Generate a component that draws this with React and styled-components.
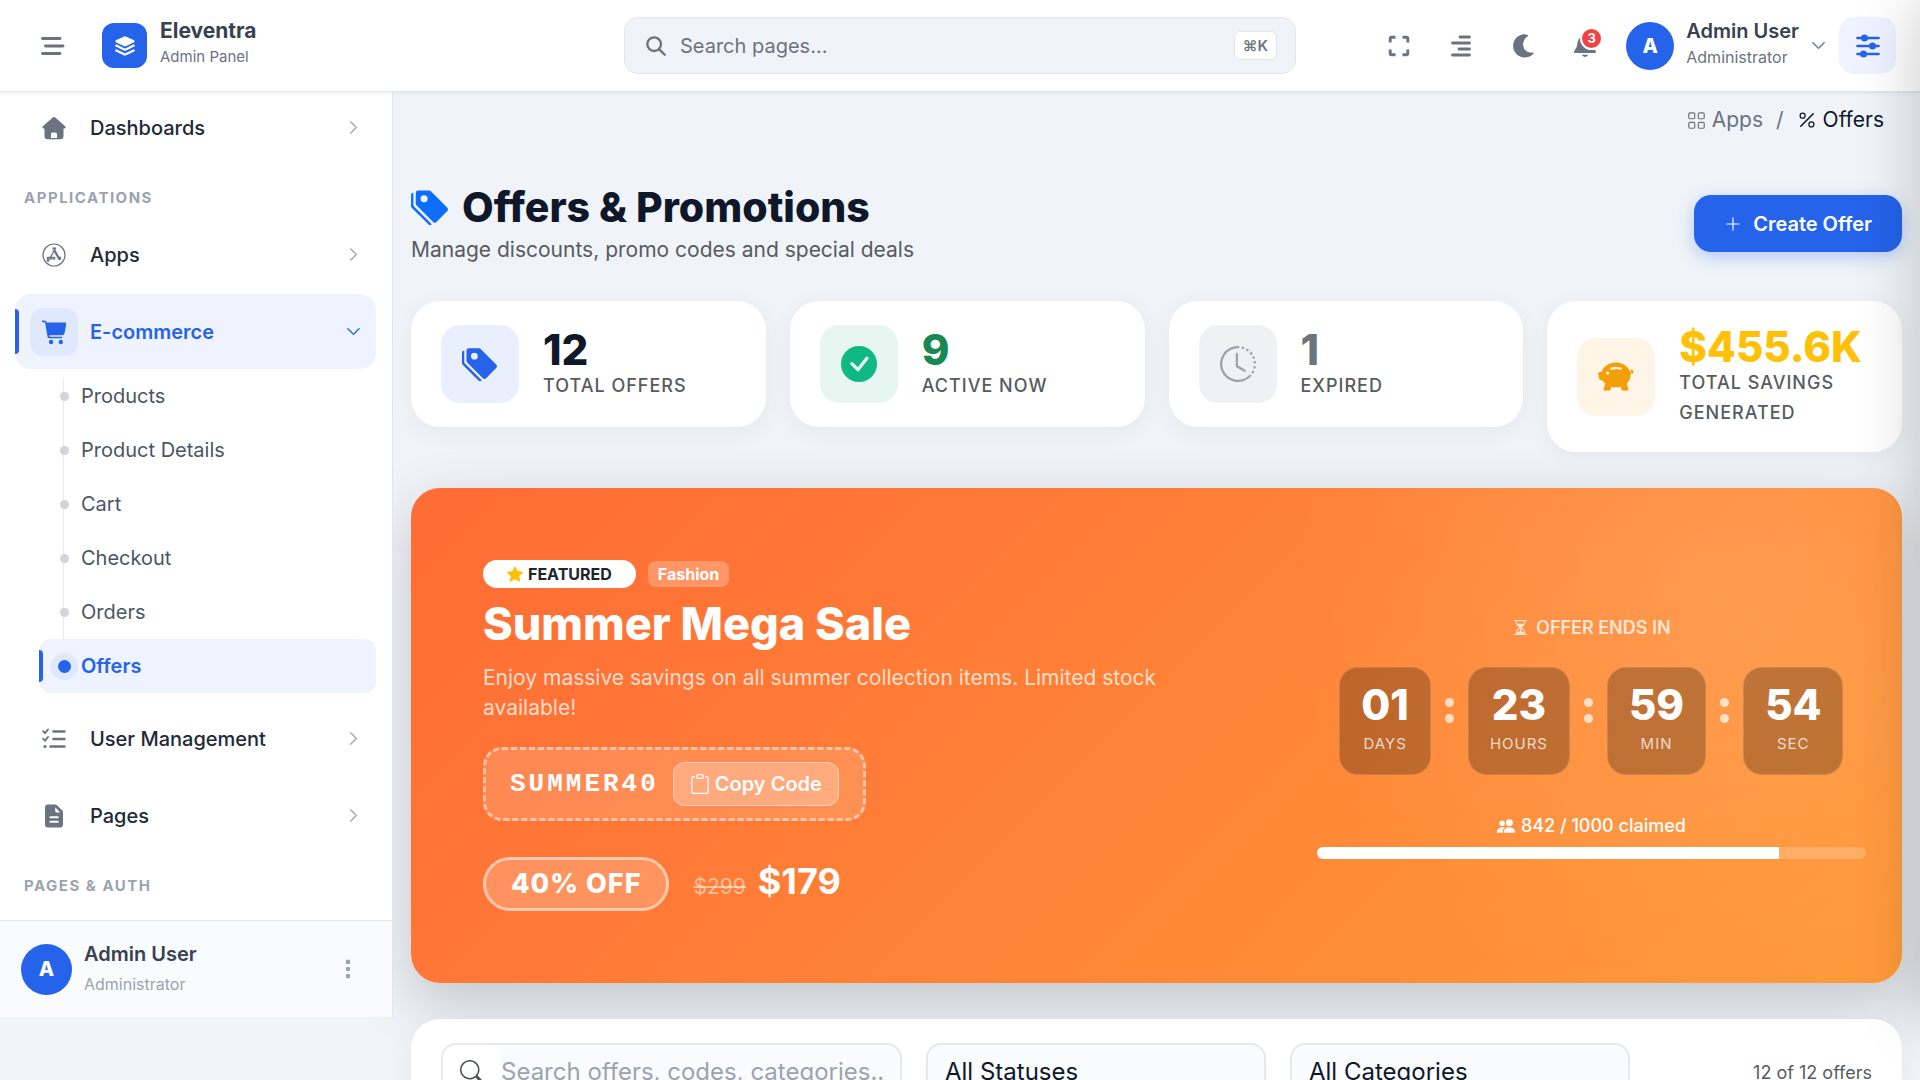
import React from "react";
import styled, { createGlobalStyle, css } from "styled-components";
import {
  BsTagsFill, BsCheckCircleFill, BsClockHistory, BsPiggyBankFill, BsStarFill, BsClipboard,
  BsHourglassSplit, BsPeopleFill, BsSearch, BsGrid, BsPercent, BsPlusLg, BsChevronRight, BsChevronDown,
} from "react-icons/bs";

const Global = createGlobalStyle`
  *, *::before, *::after { box-sizing: border-box; }
  html { scrollbar-width: none; }
  body {
    margin: 0;
    background: #f0f4f8;
    color: #1f2937;
    font-family: Inter, "Liberation Sans", sans-serif;
    font-size: 20px;
    line-height: 1.5;
  }
  button, input, select { font: inherit; color: inherit; }
  button { border: 0; background: none; padding: 0; cursor: pointer; }
  a { color: inherit; text-decoration: none; }
  ul { list-style: none; margin: 0; padding: 0; }
  h1, h2, p { margin: 0; }
  svg { display: block; flex: none; }
`;

/* ---------- icons ---------- */
const Svg = ({ size = 24, children, ...rest }) => (
  <svg width={size} height={size} viewBox="0 0 24 24" fill="none" stroke="currentColor"
    strokeLinecap="round" strokeLinejoin="round" aria-hidden="true" {...rest}>{children}</svg>
);
const MenuIcon = () => <Svg size={24} strokeWidth="2.9"><path d="M1.500 4.500h17.500M4.500 12h17.500M1.500 19.500h17.500" /></Svg>;
const LayersIcon = () => (
  <Svg size={20} fill="currentColor" stroke="none">
    <path d="M11.100 .5a2 2 0 0 1 1.800 0l10 4.700a1.300 1.300 0 0 1 0 2.300l-10 4.700a2 2 0 0 1-1.800 0l-10-4.700a1.300 1.300 0 0 1 0-2.300z" />
    <path d="M1.500 11.500l9.600 4.600a2 2 0 0 0 1.800 0l9.600-4.600M1.500 17.300l9.600 4.600a2 2 0 0 0 1.800 0l9.600-4.600" fill="none" stroke="currentColor" strokeWidth="2.600" />
  </Svg>
);
const HomeIcon = () => (
  <Svg size={24} fill="currentColor" stroke="none">
    <path d="M10.700 1.500a2 2 0 0 1 2.600 0l9.800 8.700c1 1 .4 2.300-.9 2.300H21.500V20a3.300 3.300 0 0 1-3.300 3.300H15V18a1.600 1.600 0 0 0-1.600-1.600h-2.800A1.600 1.600 0 0 0 9 18v5.300H5.800A3.300 3.300 0 0 1 2.500 20v-7.500h-.7c-1.300 0-1.900-1.300-.9-2.300z" />
    <path d="M9 22h6v1.300H9z" />
  </Svg>
);
const AppStoreIcon = () => (
  <Svg size={24} strokeWidth="1.200">
    <circle cx="12" cy="12" r="11" />
    <path d="M10.700 5.200l.7-.3.700 1.300.7-1.300.8.400-.8 1.800 5.300 9.200-.9.500-5.100-8.800-4 6.900M11 7.600l.6 1.200-3.300 5.600M5.500 14.300h6.700l.8 1.500H5.300zM15.600 14.300h3l.1 1.500h-2.200M7 17l-.9 1.300-.9-.4.500-.9" />
  </Svg>
);
const CartIcon = () => (
  <Svg size={26} fill="currentColor" stroke="none">
    <path d="M1 1.300h1.800a2.600 2.600 0 0 1 2.500 1.900H22a1.300 1.300 0 0 1 1.300 1.500l-1.500 8.200a2.600 2.600 0 0 1-2.600 2.100H7.700l.2 1.300h11.600v1.500H7.600a1.600 1.600 0 0 1-1.500-1.300L3.900 4a1.200 1.200 0 0 0-1.100-1H1z" />
    <circle cx="9.300" cy="21.200" r="2" /><circle cx="18.300" cy="21.200" r="2" />
  </Svg>
);
const ListCheckIcon = () => (
  <Svg size={24} strokeWidth="2.500">
    <path d="M11.500 4.500H22.500M11.500 12H22.500M8.500 19.500H22.500" />
    <path d="M1.200 4.300l1.800 1.900L6 2.500M1.200 11.800l1.800 1.900L6 10" strokeWidth="1.900" />
    <circle cx="3" cy="19.500" r="1.600" fill="currentColor" stroke="none" />
  </Svg>
);
const FileIcon = () => (
  <Svg size={24} fill="currentColor" stroke="none">
    <path fillRule="evenodd" d="M6.300 .5H13c.9 0 1.700.3 2.300.9l4.800 4.800c.6.600.9 1.400.9 2.300V20.500a3 3 0 0 1-3 3H6a3 3 0 0 1-3-3V3.800A3.300 3.300 0 0 1 6.300.5zM13.200 3.200v3.600c0 .9.700 1.600 1.600 1.600h3.400zM8.400 12.300a1 1 0 0 0 0 2h7.400a1 1 0 0 0 0-2zM8.400 16.800a1 1 0 0 0 0 2h7.400a1 1 0 0 0 0-2z" />
  </Svg>
);
const ExpandIcon = () => <Svg size={24} strokeWidth="2.900" strokeLinecap="butt"><path d="M3.200 8.500V4.200a1 1 0 0 1 1-1h4.300M15.500 3.200h4.300a1 1 0 0 1 1 1v4.300M20.800 15.500v4.300a1 1 0 0 1-1 1h-4.300M8.500 20.800H4.200a1 1 0 0 1-1-1v-4.300" /></Svg>;
const AlignIcon = () => <Svg size={24} strokeWidth="2.800"><path d="M11 3h9.500M3.500 9h17M10 15h10.500M3.500 21h17" /></Svg>;
const MoonIcon = () => <Svg size={24} fill="currentColor" stroke="none"><path d="M12.300 .3c1.600 0 3.100.4 4.400 1 .6.300.5 1.100-.1 1.300a8.600 8.600 0 0 0 2.300 16c1 .2 2 .2 3 0 .6-.1 1 .6.600 1.100A11.700 11.700 0 1 1 12.300.3z" /></Svg>;
const BellIcon = () => (
  <Svg size={24} fill="currentColor" stroke="none">
    <path d="M12 2a7.500 7.500 0 0 0-7.300 5.800L3.500 13.500l-2.200 3.400c-.6 1 .1 2.100 1.200 2.100h19c1.100 0 1.800-1.100 1.200-2.100l-2.200-3.400-1.200-5.700A7.500 7.500 0 0 0 12 2zM8.700 20.800a3.600 3.600 0 0 0 6.600 0z" />
  </Svg>
);
const SlidersIcon = () => (
  <Svg size={24} strokeWidth="2.700">
    <path d="M1.500 4h21M1.500 12h21M1.500 20h21" />
    <g fill="currentColor" stroke="none"><circle cx="8.500" cy="4" r="3.500" /><circle cx="16.500" cy="12" r="3.500" /><circle cx="7.500" cy="20" r="3.500" /></g>
  </Svg>
);
const DotsIcon = () => <Svg size={20} fill="currentColor" stroke="none"><circle cx="12" cy="3.500" r="2.800" /><circle cx="12" cy="12" r="2.800" /><circle cx="12" cy="20.500" r="2.800" /></Svg>;
const SearchIcon = () => <Svg size={20} strokeWidth="2.800"><circle cx="9.800" cy="9.800" r="8.200" /><path d="M16 16l6.500 6.500" /></Svg>;

/* ---------- header ---------- */
const Header = styled.header`
  position: sticky;
  top: 0;
  z-index: 10;
  display: grid;
  grid-template-columns: 1fr minmax(0, 672px) 1fr;
  align-items: center;
  height: 92px;
  padding: 0 24px;
  background: #fff;
  border-bottom: 1px solid #e2e5ea;
  box-shadow: 0 1px 4px rgba(0, 0, 0, 0.08);
`;
const Brand = styled.div`
  display: flex;
  align-items: center;
`;
const IconButton = styled.button`
  position: relative;
  display: grid;
  place-items: center;
  width: 57px;
  height: 57px;
  border-radius: 15px;
  color: ${(p) => (p.$active ? "#2563eb" : "#6b7280")};
  background: ${(p) => (p.$active ? "#eef3ff" : "transparent")};
`;
const Logo = styled.a`
  display: grid;
  place-items: center;
  width: 45px;
  height: 45px;
  margin-left: 21px;
  margin-right: 13px;
  border-radius: 12px;
  color: #fff;
  background: #2563eb;
`;
const Stack = styled.span`
  display: flex;
  flex-direction: column;
  text-align: left;
`;
const HeaderStack = styled(Stack)`
  padding-bottom: 4px;
`;
const BrandName = styled.strong`
  font-size: 21px;
  line-height: 26px;
  font-weight: 700;
  color: #374151;
`;
const Muted = styled.span`
  font-size: ${(p) => (p.$small ? 15 : 16)}px;
  line-height: 26px;
  color: ${(p) => (p.$light ? "#9ca3af" : "#6b7280")};
`;
const UserName = styled.strong`
  font-size: 20px;
  line-height: 26px;
  font-weight: 600;
  color: #374151;
`;
const SearchBox = styled.label`
  display: flex;
  align-items: center;
  gap: 14px;
  height: 57px;
  padding: 0 18px 0 21px;
  border: 1px solid #e2e5ea;
  border-radius: 14px;
  background: #f0f4f8;
  color: #6b7280;
`;
const SearchInput = styled.input`
  flex: 1;
  min-width: 0;
  border: 0;
  outline: 0;
  padding: 0;
  background: transparent;
  &::placeholder { color: #6b7280; opacity: 1; }
`;
const Kbd = styled.kbd`
  padding: 0 8px;
  border: 1px solid #e2e5ea;
  border-radius: 6px;
  background: #fff;
  font-family: inherit;
  font-size: 15px;
  line-height: 27px;
  font-weight: 600;
`;
const Actions = styled.div`
  display: flex;
  align-items: center;
  justify-content: flex-end;
  gap: 5px;
`;
const Badge = styled.span`
  position: absolute;
  top: 10px;
  right: 10px;
  width: 23px;
  height: 23px;
  border: 2px solid #fff;
  border-radius: 50%;
  background: #ef4444;
  color: #fff;
  font-size: 13px;
  line-height: 19px;
  font-weight: 700;
  text-align: center;
`;
const UserButton = styled.button`
  display: flex;
  align-items: center;
  gap: 12px;
  padding: 0 8px;
  color: #6b7280;
`;
const Avatar = styled.span`
  display: grid;
  place-items: center;
  width: ${(p) => p.$size}px;
  height: ${(p) => p.$size}px;
  border-radius: 50%;
  background: #2563eb;
  color: #fff;
  font-size: 20px;
  font-weight: 800;
`;

/* ---------- sidebar ---------- */
const Shell = styled.div`
  display: flex;
  align-items: flex-start;
`;
const Sidebar = styled.aside`
  position: relative;
  z-index: 1;
  flex: none;
  width: 393px;
  background: #fff;
  border-right: 1px solid #e2e5ea;
`;
const Nav = styled.nav`
  display: flex;
  flex-direction: column;
  gap: 2px;
  margin-top: -2px;
  padding: 0 16px 0 15px;
`;
const NavLabel = styled.span`
  padding: 19px 9px 5px;
  font-size: 15px;
  line-height: 24px;
  font-weight: 700;
  letter-spacing: 0.1em;
  color: #9ca3af;
`;
const bar = css`
  &::before {
    content: "";
    position: absolute;
    left: 0;
    top: 20%;
    bottom: 20%;
    width: 4px;
    border-radius: 0 4px 4px 0;
    background: #2563eb;
  }
`;
const NavItem = styled.button`
  position: relative;
  display: grid;
  grid-template-columns: 48px 1fr 20px;
  align-items: center;
  column-gap: 12px;
  width: 100%;
  height: 75px;
  padding: 0 13px 0 15px;
  border-radius: 16px;
  text-align: left;
  font-weight: ${(p) => (p.$active ? 600 : 500)};
  color: ${(p) => (p.$active ? "#2563eb" : "#1f2937")};
  background: ${(p) => (p.$active ? "#eef3ff" : "transparent")};
  ${(p) => p.$active && bar}
`;
const NavIcon = styled.span`
  display: grid;
  place-items: center;
  height: 48px;
  border-radius: 13px;
  color: ${(p) => (p.$active ? "#2563eb" : "#6b7280")};
  background: ${(p) => (p.$active ? "#e0e8fd" : "transparent")};
`;
const Chevron = styled.span`
  display: grid;
  place-items: center;
  color: ${(p) => (p.$active ? "#2563eb" : "#9ca3af")};
`;
const SubList = styled.ul`
  margin: -2px 0 6px 24px;
  background: linear-gradient(#e8eaee, #e8eaee) 24px 10px / 1px 260px no-repeat;
`;
const SubItem = styled.a`
  position: relative;
  display: grid;
  grid-template-columns: 27px 1fr;
  align-items: center;
  column-gap: 3px;
  height: 54px;
  padding-left: 12px;
  border-radius: 12px;
  font-weight: ${(p) => (p.$active ? 600 : 400)};
  color: ${(p) => (p.$active ? "#2563eb" : "#4b5563")};
  background: ${(p) => (p.$active ? "#eef3ff" : "transparent")};
  ${(p) => p.$active && bar}
`;
const Dot = styled.i`
  justify-self: center;
  width: ${(p) => (p.$active ? 13 : 9)}px;
  height: ${(p) => (p.$active ? 13 : 9)}px;
  border-radius: 50%;
  background: ${(p) => (p.$active ? "#2563eb" : "#d1d5db")};
  box-shadow: ${(p) => (p.$active ? "0 0 0 7px #dfe8fd" : "none")};
`;
const SideFooter = styled.div`
  display: flex;
  align-items: center;
  gap: 12px;
  height: 97px;
  margin-top: 17px;
  padding: 0 34px 0 21px;
  border-top: 1px solid #e2e5ea;
  background: #fafbfd;
  color: #9ca3af;
  ${Stack} { flex: 1; gap: 4px; }
`;

/* ---------- page ---------- */
const Main = styled.main`
  flex: 1;
  min-width: 0;
  padding: 10px 18px 36px;
`;
const Crumbs = styled.nav`
  display: flex;
  align-items: center;
  justify-content: flex-end;
  gap: 13px;
  padding-right: 18px;
  font-size: 21px;
  line-height: 36px;
  color: #6b7280;
`;
const Crumb = styled.a`
  display: flex;
  align-items: center;
  gap: 6px;
  color: ${(p) => (p.$current ? "#0f172a" : "inherit")};
`;
const PageHead = styled.div`
  display: flex;
  align-items: center;
  justify-content: space-between;
  margin: 43px 0 35px;
`;
const Title = styled.h1`
  display: flex;
  align-items: center;
  gap: 13px;
  font-size: 41px;
  line-height: 52px;
  font-weight: 800;
  color: #0f172a;
  svg { color: #0d6efd; }
`;
const Subtitle = styled.p`
  font-size: 21px;
  line-height: 33px;
  color: #565b60;
`;
const CreateButton = styled.button`
  display: flex;
  align-items: center;
  gap: 11px;
  height: 57px;
  padding: 0 30px;
  border-radius: 17px;
  background: #2563eb;
  box-shadow: 0 5px 17px rgba(37, 99, 235, 0.3);
  color: #fff;
  font-weight: 600;
`;
const Stats = styled.section`
  display: grid;
  grid-template-columns: repeat(4, minmax(0, 1fr));
  align-items: start;
  gap: 24px;
`;
const StatCard = styled.article`
  display: flex;
  align-items: center;
  gap: 24px;
  padding: 24px 30px;
  border-radius: 29px;
  background: #fff;
  box-shadow: 0 5px 24px rgba(0, 0, 0, 0.05);
`;
const StatIcon = styled.span`
  display: grid;
  place-items: center;
  flex: none;
  width: 78px;
  height: 78px;
  border-radius: 19px;
  color: ${(p) => p.$color};
  background: ${(p) => p.$bg};
`;
const StatValue = styled.strong`
  font-size: 42px;
  line-height: 43px;
  font-weight: 800;
  color: ${(p) => p.$color};
`;
const StatLabel = styled.span`
  font-size: 18px;
  line-height: 30px;
  font-weight: 500;
  letter-spacing: 1px;
  color: #565b60;
`;

/* ---------- featured offer ---------- */
const Banner = styled.section`
  display: grid;
  grid-template-columns: 7fr 5fr;
  align-items: center;
  margin: 36px 0;
  border-radius: 29px;
  color: #fff;
  background:
    radial-gradient(circle at 88% 22%, rgba(255, 255, 255, 0.12), transparent 32%),
    linear-gradient(135deg, #ff6b35, #ff9a38);
  box-shadow: 0 20px 60px rgba(0, 0, 0, 0.2);
`;
const Offer = styled.div`
  display: flex;
  flex-direction: column;
  align-items: flex-start;
  padding: 72px;
`;
const Tags = styled.div`
  display: flex;
  align-items: center;
  gap: 12px;
`;
const Tag = styled.span`
  display: flex;
  align-items: center;
  gap: 5px;
  padding: 0 ${(p) => (p.$solid ? 24 : 10)}px;
  border-radius: ${(p) => (p.$solid ? 14 : 8)}px;
  background: ${(p) => (p.$solid ? "#fff" : "rgba(255, 255, 255, 0.25)")};
  color: ${(p) => (p.$solid ? "#212529" : "#fff")};
  font-size: 16px;
  line-height: ${(p) => (p.$solid ? 28 : 26)}px;
  font-weight: 700;
  svg { color: #ffc107; }
`;
const OfferTitle = styled.h2`
  margin-top: 9px;
  font-size: 45px;
  line-height: 54px;
  font-weight: 800;
`;
const OfferText = styled.p`
  margin: 12px 0 24px;
  font-size: 21px;
  line-height: 30px;
  color: rgba(255, 255, 255, 0.75);
`;
const CodeBox = styled.div`
  display: flex;
  align-items: center;
  gap: 14px;
  height: 74px;
  padding: 0 24px;
  border: 3px dashed rgba(255, 255, 255, 0.5);
  border-radius: 19px;
  background: rgba(255, 255, 255, 0.15);
`;
const Code = styled.code`
  font-family: "Liberation Mono", "Courier New", monospace;
  font-size: 26px;
  font-weight: 700;
  letter-spacing: 3px;
`;
const CopyButton = styled.button`
  display: flex;
  align-items: center;
  gap: 5px;
  height: 44px;
  padding: 0 16px;
  border: 1px solid rgba(255, 255, 255, 0.4);
  border-radius: 12px;
  background: rgba(255, 255, 255, 0.25);
  font-weight: 600;
`;
const PriceRow = styled.div`
  display: flex;
  align-items: center;
  gap: 24px;
  margin-top: 36px;
`;
const Discount = styled.strong`
  padding: 0 25px;
  border: 3px solid rgba(255, 255, 255, 0.5);
  border-radius: 27px;
  background: rgba(255, 255, 255, 0.2);
  font-size: 27px;
  line-height: 48px;
  font-weight: 800;
  letter-spacing: 1px;
`;
const Prices = styled.div`
  display: flex;
  align-items: baseline;
  gap: 12px;
  line-height: 48px;
  s { font-size: 21px; color: rgba(255, 255, 255, 0.5); }
  strong { font-size: 36px; font-weight: 700; }
`;
const Countdown = styled.div`
  display: flex;
  flex-direction: column;
  align-items: center;
  padding: 36px;
`;
const CountLabel = styled.p`
  display: flex;
  align-items: center;
  gap: 7px;
  margin-bottom: 24px;
  font-size: 18px;
  line-height: 30px;
  font-weight: 600;
  color: rgba(255, 255, 255, 0.75);
`;
const Timer = styled.div`
  display: flex;
  align-items: center;
  gap: 12px;
`;
const Unit = styled.div`
  display: flex;
  flex-direction: column;
  align-items: center;
  height: 108px;
  padding: 13px 21px 0;
  border: 1px solid rgba(255, 255, 255, 0.15);
  border-radius: 19px;
  background: rgba(0, 0, 0, 0.25);
  strong { font-size: 42px; line-height: 48px; font-weight: 800; }
  span {
    font-size: 15px;
    line-height: 30px;
    letter-spacing: 1px;
    color: rgba(255, 255, 255, 0.75);
  }
`;
const Colon = styled.span`
  display: flex;
  flex-direction: column;
  gap: 7px;
  padding: 0 2px 20px;
  &::before, &::after {
    content: "";
    width: 9px;
    height: 9px;
    border-radius: 50%;
    background: rgba(255, 255, 255, 0.7);
  }
`;
const Claimed = styled.p`
  display: flex;
  align-items: center;
  gap: 6px;
  margin: 36px 0 6px;
  font-size: 18px;
  line-height: 30px;
  font-weight: 500;
`;
const Progress = styled.div`
  width: 100%;
  height: 12px;
  overflow: hidden;
  border-radius: 6px;
  background: rgba(255, 255, 255, 0.2);
`;
const ProgressFill = styled.div`
  height: 100%;
  background: #fff;
`;

/* ---------- filters ---------- */
const Filters = styled.form`
  display: grid;
  grid-template-columns: 461fr 340fr 340fr 218fr;
  align-items: center;
  gap: 24px;
  padding: 24px 30px;
  border-radius: 29px;
  background: #fff;
  box-shadow: 0 5px 24px rgba(0, 0, 0, 0.05);
`;
const field = css`
  height: 58px;
  border: 2px solid #e5e8ec;
  border-radius: 15px;
  background: #fafbfd;
  font-size: 24px;
`;
const FilterSearch = styled.label`
  ${field}
  display: flex;
  align-items: center;
  overflow: hidden;
`;
const FilterIcon = styled.span`
  display: grid;
  place-items: center;
  width: 58px;
  height: 100%;
  border-radius: 0 13px 13px 0;
  background: #fff;
  color: #4b5157;
`;
const FilterInput = styled(SearchInput)`
  margin-right: 16px;
  &::placeholder { color: #9ca3af; }
`;
const FilterSelect = styled.select`
  ${field}
  width: 100%;
  padding: 0 17px;
  appearance: none;
  color: #0f172a;
`;
const Count = styled.span`
  text-align: right;
  font-size: 18px;
  color: #565b60;
`;
const EdgeShade = styled.div`
  position: fixed;
  z-index: 20;
  top: 0;
  bottom: 63px;
  left: 100%;
  width: 400px;
  pointer-events: none;
  box-shadow: 0 0 60px rgba(0, 0, 0, 0.22);
`;

const SUB_ITEMS = ["Products", "Product Details", "Cart", "Checkout", "Orders", "Offers"];
const STATS = [
  { value: "12", label: "TOTAL OFFERS", icon: <BsTagsFill size={36} />, color: "#2563eb", bg: "#e9effd", text: "#0f172a" },
  { value: "9", label: "ACTIVE NOW", icon: <BsCheckCircleFill size={36} />, color: "#10b981", bg: "#e7f6f1", text: "#198754" },
  { value: "1", label: "EXPIRED", icon: <BsClockHistory size={36} />, color: "#9ca3af", bg: "#f0f1f2", text: "#6c757d" },
  { value: "$455.6K", label: "TOTAL SAVINGS GENERATED", icon: <BsPiggyBankFill size={36} />, color: "#f59e0b", bg: "#fef5e7", text: "#ffc107" },
];
const UNITS = [["01", "DAYS"], ["23", "HOURS"], ["59", "MIN"], ["54", "SEC"]];

const Item = ({ icon, children, active }) => (
  <NavItem type="button" $active={active} aria-expanded={!!active}>
    <NavIcon $active={active}>{icon}</NavIcon>
    {children}
    <Chevron $active={active}>
      {active ? <BsChevronDown size={15} strokeWidth="0.6" /> : <BsChevronRight size={15} strokeWidth="0.6" />}
    </Chevron>
  </NavItem>
);

export default function App() {
  const claimed = 842;
  const total = 1000;
  return (
    <>
      <Global />
      <Header>
        <Brand>
          <IconButton type="button" aria-label="Toggle menu"><MenuIcon /></IconButton>
          <Logo href="#" aria-label="Home"><LayersIcon /></Logo>
          <HeaderStack>
            <BrandName>Eleventra</BrandName>
            <Muted $small>Admin Panel</Muted>
          </HeaderStack>
        </Brand>
        <SearchBox>
          <SearchIcon />
          <SearchInput type="text" placeholder="Search pages..." aria-label="Search pages" />
          <Kbd>⌘K</Kbd>
        </SearchBox>
        <Actions>
          <IconButton type="button" aria-label="Fullscreen"><ExpandIcon /></IconButton>
          <IconButton type="button" aria-label="Text direction"><AlignIcon /></IconButton>
          <IconButton type="button" aria-label="Dark mode"><MoonIcon /></IconButton>
          <IconButton type="button" aria-label="Notifications"><BellIcon /><Badge>3</Badge></IconButton>
          <UserButton type="button">
            <Avatar $size={48}>A</Avatar>
            <HeaderStack>
              <UserName>Admin User</UserName>
              <Muted>Administrator</Muted>
            </HeaderStack>
            <BsChevronDown size={15} strokeWidth="0.6" />
          </UserButton>
          <IconButton type="button" aria-label="Settings" $active><SlidersIcon /></IconButton>
        </Actions>
      </Header>

      <Shell>
        <Sidebar>
          <Nav aria-label="Main">
            <Item icon={<HomeIcon />}>Dashboards</Item>
            <NavLabel>APPLICATIONS</NavLabel>
            <Item icon={<AppStoreIcon />}>Apps</Item>
            <Item icon={<CartIcon />} active>E-commerce</Item>
            <SubList>
              {SUB_ITEMS.map((name) => {
                const active = name === "Offers";
                return (
                  <li key={name}>
                    <SubItem href="#" $active={active}><Dot $active={active} />{name}</SubItem>
                  </li>
                );
              })}
            </SubList>
            <Item icon={<ListCheckIcon />}>User Management</Item>
            <Item icon={<FileIcon />}>Pages</Item>
            <NavLabel>PAGES &amp; AUTH</NavLabel>
          </Nav>
          <SideFooter>
            <Avatar $size={51}>A</Avatar>
            <Stack>
              <UserName>Admin User</UserName>
              <Muted $light>Administrator</Muted>
            </Stack>
            <button type="button" aria-label="Account options"><DotsIcon /></button>
          </SideFooter>
        </Sidebar>

        <Main>
          <Crumbs aria-label="Breadcrumb">
            <Crumb href="#"><BsGrid size={19} />Apps</Crumb>
            <span>/</span>
            <Crumb href="#" $current><BsPercent size={20} />Offers</Crumb>
          </Crumbs>

          <PageHead>
            <div>
              <Title><BsTagsFill size={38} />Offers &amp; Promotions</Title>
              <Subtitle>Manage discounts, promo codes and special deals</Subtitle>
            </div>
            <CreateButton type="button"><BsPlusLg size={18} />Create Offer</CreateButton>
          </PageHead>

          <Stats>
            {STATS.map((s) => (
              <StatCard key={s.label}>
                <StatIcon $color={s.color} $bg={s.bg}>{s.icon}</StatIcon>
                <Stack>
                  <StatValue $color={s.text}>{s.value}</StatValue>
                  <StatLabel>{s.label}</StatLabel>
                </Stack>
              </StatCard>
            ))}
          </Stats>

          <Banner>
            <Offer>
              <Tags>
                <Tag $solid><BsStarFill size={16} />FEATURED</Tag>
                <Tag>Fashion</Tag>
              </Tags>
              <OfferTitle>Summer Mega Sale</OfferTitle>
              <OfferText>Enjoy massive savings on all summer collection items. Limited stock available!</OfferText>
              <CodeBox>
                <Code>SUMMER40</Code>
                <CopyButton type="button"><BsClipboard size={20} />Copy Code</CopyButton>
              </CodeBox>
              <PriceRow>
                <Discount>40% OFF</Discount>
                <Prices><s>$299</s><strong>$179</strong></Prices>
              </PriceRow>
            </Offer>
            <Countdown>
              <CountLabel><BsHourglassSplit size={17} />OFFER ENDS IN</CountLabel>
              <Timer>
                {UNITS.map(([n, label], i) => (
                  <React.Fragment key={label}>
                    {i > 0 && <Colon />}
                    <Unit><strong>{n}</strong><span>{label}</span></Unit>
                  </React.Fragment>
                ))}
              </Timer>
              <Claimed><BsPeopleFill size={18} />{claimed} / {total} claimed</Claimed>
              <Progress role="progressbar" aria-label="Claimed" aria-valuenow={claimed} aria-valuemin={0} aria-valuemax={total}>
                <ProgressFill style={{ width: `${(claimed / total) * 100}%` }} />
              </Progress>
            </Countdown>
          </Banner>

          <Filters>
            <FilterSearch>
              <FilterIcon><BsSearch size={24} /></FilterIcon>
              <FilterInput type="text" placeholder="Search offers, codes, categories..." aria-label="Search offers" />
            </FilterSearch>
            <FilterSelect aria-label="Status" defaultValue="all"><option value="all">All Statuses</option></FilterSelect>
            <FilterSelect aria-label="Category" defaultValue="all"><option value="all">All Categories</option></FilterSelect>
            <Count>12 of 12 offers</Count>
          </Filters>
        </Main>
      </Shell>
      <EdgeShade />
    </>
  );
}
